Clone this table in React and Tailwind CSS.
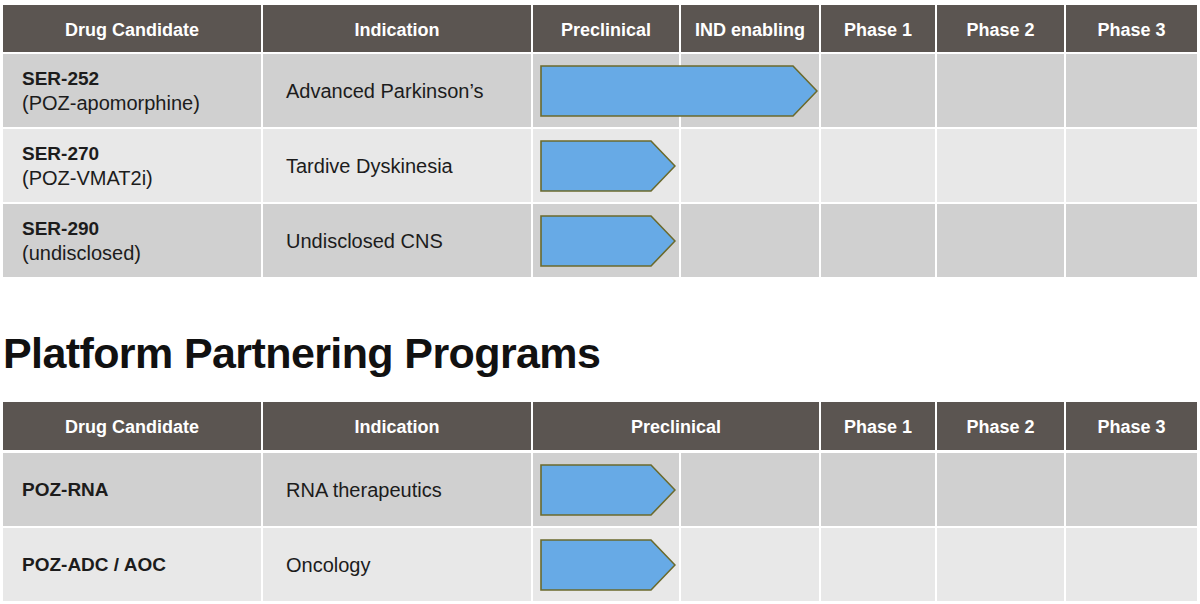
import React from 'react'

const cols = 'grid grid-cols-[258px_268px_146px_138px_114px_127px_131px] gap-x-[2px]'

const Arrow = ({ width }) => (
  <svg
    width={width}
    height={52}
    viewBox={`0 0 ${width} 52`}
    className="absolute left-[7px] top-1/2 -translate-y-1/2 z-10"
  >
    <polygon
      points={`1,1 ${width - 25},1 ${width - 1},26 ${width - 25},51 1,51`}
      fill="#67aae6"
      stroke="#6b6a2c"
      strokeWidth="1.6"
    />
  </svg>
)

const HeadCell = ({ children, className = '' }) => (
  <div className={`bg-[#5b5551] text-white font-bold text-[18px] flex items-center justify-center pt-[3px] ${className}`}>
    {children}
  </div>
)

const Row = ({ name, sub, indication, arrow, shade }) => {
  const bg = shade ? 'bg-[#d0d0d0]' : 'bg-[#e8e8e8]'
  return (
    <div className={`${cols} h-[73px]`}>
      <div className={`${bg} flex flex-col justify-center pl-[19px] text-[#1c1c1c]`}>
        <div className="font-bold text-[19px] leading-[25px]">{name}</div>
        {sub && <div className="text-[20px] leading-[25px]">{sub}</div>}
      </div>
      <div className={`${bg} flex items-center pl-[23px] text-[20px] text-[#1c1c1c]`}>{indication}</div>
      <div className={`${bg} relative`}>
        <Arrow width={arrow} />
      </div>
      <div className={bg}></div>
      <div className={bg}></div>
      <div className={bg}></div>
      <div className={bg}></div>
    </div>
  )
}

export default function App() {
  return (
    <div className="w-[1200px] h-[604px] bg-white px-[3px] pt-[5px] overflow-hidden" style={{ fontFamily: '"Liberation Sans", Arial, sans-serif' }}>
      <div className={`${cols} h-[47px]`}>
        <HeadCell>Drug Candidate</HeadCell>
        <HeadCell>Indication</HeadCell>
        <HeadCell>Preclinical</HeadCell>
        <HeadCell>IND enabling</HeadCell>
        <HeadCell>Phase 1</HeadCell>
        <HeadCell>Phase 2</HeadCell>
        <HeadCell>Phase 3</HeadCell>
      </div>
      <div className="mt-[2px] flex flex-col gap-[2px]">
        <Row name="SER-252" sub="(POZ-apomorphine)" indication="Advanced Parkinson’s" arrow={278} shade />
        <Row name="SER-270" sub="(POZ-VMAT2i)" indication="Tardive Dyskinesia" arrow={136} />
        <Row name="SER-290" sub="(undisclosed)" indication="Undisclosed CNS" arrow={136} shade />
      </div>

      <h1 className="pt-[55px] pb-[27px] text-[43px] leading-[43px] font-bold tracking-[-0.6px] text-[#111]">
        Platform Partnering Programs
      </h1>

      <div className={`${cols} h-[48px]`}>
        <HeadCell>Drug Candidate</HeadCell>
        <HeadCell>Indication</HeadCell>
        <HeadCell className="col-span-2">Preclinical</HeadCell>
        <HeadCell>Phase 1</HeadCell>
        <HeadCell>Phase 2</HeadCell>
        <HeadCell>Phase 3</HeadCell>
      </div>
      <div className="mt-[3px] flex flex-col gap-[2px]">
        <Row name="POZ-RNA" indication="RNA therapeutics" arrow={136} shade />
        <Row name="POZ-ADC / AOC" indication="Oncology" arrow={136} />
      </div>
    </div>
  )
}
